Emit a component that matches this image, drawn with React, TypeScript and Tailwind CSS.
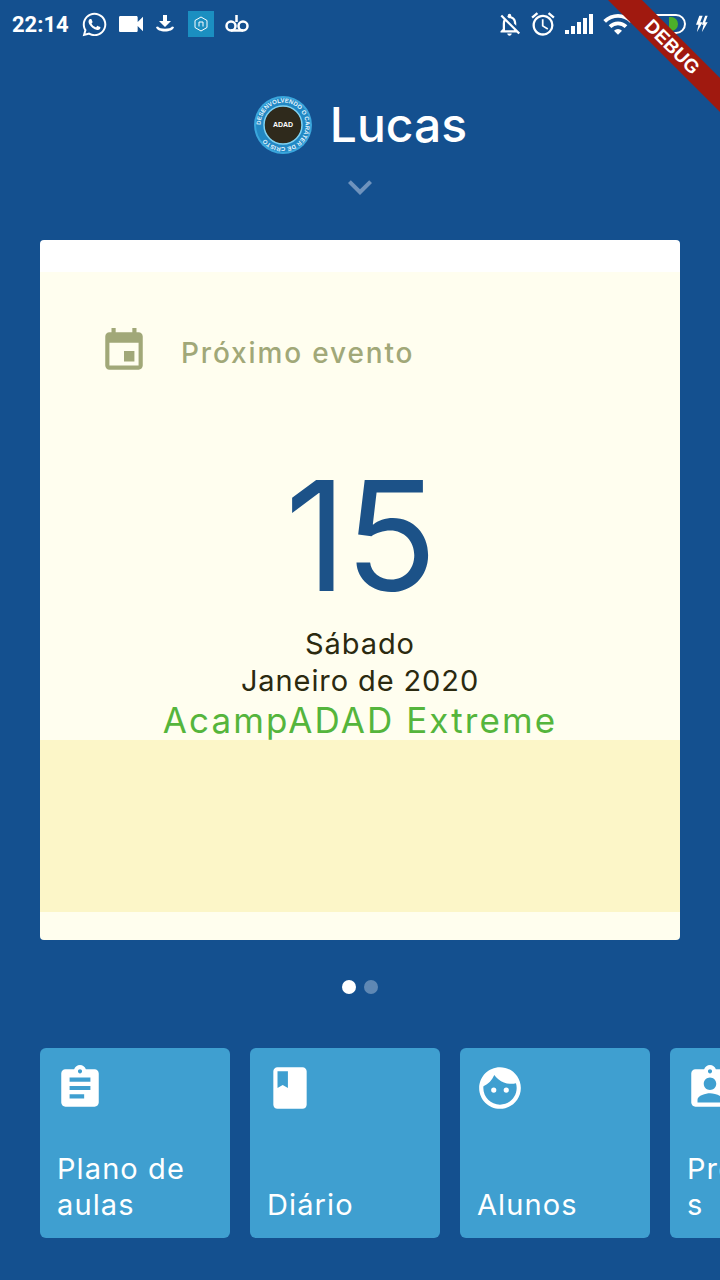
import { FaWhatsapp } from "react-icons/fa";
import {
  MdAccessAlarm,
  MdAssignment,
  MdAssignmentInd,
  MdBook,
  MdEvent,
  MdFace,
  MdKeyboardArrowDown,
  MdOutlineNotificationsOff,
  MdVideocam,
  MdWifi,
} from "react-icons/md";

function StatusBar() {
  return (
    <div className="flex h-[48px] items-center justify-between pl-[12px] pr-[10px] text-white">
      <div className="flex items-center">
        <span className="w-[60px] font-['Roboto',sans-serif] text-[22px] font-bold">22:14</span>
        <FaWhatsapp className="ml-[9px] h-[27px] w-[27px]" />
        <MdVideocam className="ml-[7px] h-[32px] w-[32px]" />
        <svg className="ml-[6px] h-[24px] w-[24px]" viewBox="0 0 24 24" fill="white">
          <path d="M10 3h4v6h4l-6 6-6-6h4z" />
          <path d="M3 15c1 6 17 6 18 0l-2-.5c-1.500 3-12.500 3-14 0z" />
        </svg>
        <div className="ml-[11px] flex h-[26px] w-[26px] items-center justify-center bg-[#1b8fc1]">
          <svg className="h-[16px] w-[16px]" viewBox="0 0 16 16" fill="none" stroke="white" strokeWidth="1">
            <path d="M8 1l6 3.500v7L8 15l-6-3.500v-7z" />
            <path d="M6 10.500V6h4v4.500" />
          </svg>
        </div>
        <svg className="ml-[10px] h-[22px] w-[26px]" viewBox="0 0 26 22" fill="none" stroke="white" strokeWidth="2.500">
          <circle cx="7" cy="13" r="4.500" />
          <circle cx="19" cy="13" r="4.500" />
          <path d="M7 17.500h12M12.500 2v7" />
        </svg>
      </div>
      <div className="flex items-center">
        <MdOutlineNotificationsOff className="h-[27px] w-[27px]" />
        <MdAccessAlarm className="ml-[6px] h-[28px] w-[28px]" />
        <svg className="ml-[8px] h-[24px] w-[28px]" viewBox="0 0 28 24" fill="white">
          <rect x="0" y="18" width="4" height="4" />
          <rect x="6" y="14" width="4" height="8" />
          <rect x="12" y="10" width="4" height="12" />
          <rect x="18" y="6" width="4" height="16" />
          <rect x="24" y="2" width="4" height="20" />
        </svg>
        <MdWifi className="ml-[9px] h-[32px] w-[32px]" />
        <div className="ml-[7px] flex h-[20px] w-[45px] items-center justify-end rounded-full border-2 border-white pr-[6px]">
          <div className="h-[14px] w-[9px] rounded-r-full bg-[#4caf2a]" />
        </div>
        <svg className="ml-[6px] h-[20px] w-[18px]" viewBox="0 0 18 24" fill="white">
          <path d="M7 2h4L8 10h3l-7 12 2-9H3z" />
          <path d="M14 2h3l-3 8h3l-7 12 2-9h-2z" />
        </svg>
      </div>
    </div>
  );
}

function Logo() {
  return (
    <svg className="h-[60px] w-[60px]" viewBox="0 0 60 60">
      <defs>
        <path id="ring" d="M30 30m-22.500 0a22.500 22.500 0 1 1 45 0a22.500 22.500 0 1 1-45 0" />
      </defs>
      <circle cx="30" cy="30" r="29" fill="#3aa6dc" />
      <circle cx="30" cy="30" r="27" fill="#2288c4" />
      <circle cx="30" cy="30" r="19" fill="#2f2a1c" stroke="#7fd2f2" strokeWidth="1.500" />
      <text fill="#e6f6ff" fontSize="6" fontFamily="'Liberation Sans',sans-serif" fontWeight="700">
        <textPath href="#ring">DESENVOLVENDO O CARÁTER DE CRISTO</textPath>
      </text>
      <text x="30" y="32" fill="white" fontSize="7" textAnchor="middle" fontFamily="'Liberation Sans',sans-serif" fontWeight="700">
        ADAD
      </text>
    </svg>
  );
}

function EventCard() {
  return (
    <div className="mx-[40px] flex h-[700px] flex-col rounded-[4px] bg-[linear-gradient(to_bottom,#ffffff_0,#ffffff_32px,#fffeef_32px,#fffeef_500px,#fcf6c8_500px,#fcf6c8_672px,#fffeee_672px)] pt-[86px]">
      <div className="flex items-center pl-[59px]">
        <MdEvent className="h-[50px] w-[50px] text-[#a1a878]" />
        <span className="ml-[32px] mt-[4px] text-[28px] font-medium tracking-[1.850px] text-[#a1a878]">Próximo evento</span>
      </div>
      <div className="mt-[65px] text-center text-[152px] leading-[190px] font-normal tracking-[-2px] text-[#1c5288]">15</div>
      <div className="mt-[-6px] text-center text-[29px] leading-[37px] tracking-[.9px] text-[#2b2a10]">
        <p>Sábado</p>
        <p>Janeiro de 2020</p>
      </div>
      <p className="mt-[1px] text-center text-[35px] leading-[40px] tracking-[2.100px] text-[#55b53c]">AcampADAD Extreme</p>
    </div>
  );
}

const tiles = [
  { label: "Plano de aulas", Icon: MdAssignment },
  { label: "Diário", Icon: MdBook },
  { label: "Alunos", Icon: MdFace },
  { label: "Presença\ns", Icon: MdAssignmentInd },
];

export default function App() {
  return (
    <div className="relative h-[1280px] w-[720px] overflow-hidden bg-[#14508f] font-['Inter',sans-serif]">
      <StatusBar />
      <div className="mt-[47px] flex h-[60px] items-center justify-center gap-[17px]">
        <Logo />
        <span className="text-[48px] font-medium text-white">Lucas</span>
      </div>
      <div className="mt-[8px] flex h-[36px] justify-center">
        <MdKeyboardArrowDown className="h-[48px] w-[48px] text-[#6f93bd]" />
      </div>
      <div className="mt-[41px]">
        <EventCard />
      </div>
      <div className="mt-[40px] flex justify-center gap-[8px]">
        <span className="h-[14px] w-[14px] rounded-full bg-white" />
        <span className="h-[14px] w-[14px] rounded-full bg-[#5f88b4]" />
      </div>
      <div className="mt-[54px] flex gap-[20px] pl-[40px]">
        {tiles.map(({ label, Icon }) => (
          <div key={label} className="flex h-[190px] w-[190px] shrink-0 flex-col justify-between rounded-[6px] bg-[#3f9fd0] pb-[15px] pl-[17px] pr-[17px] pt-[15px] text-white">
            <Icon className="ml-[-2px] h-[50px] w-[50px]" />
            <span className="whitespace-pre-line text-[29px] leading-[36px] tracking-[1.100px]">{label}</span>
          </div>
        ))}
      </div>
      <div className="absolute left-[572px] top-[35px] flex h-[24px] w-[200px] rotate-45 items-center justify-center bg-[#a0190f] font-['Liberation_Sans',sans-serif] text-[19px] font-bold text-white">
        DEBUG
      </div>
    </div>
  );
}
